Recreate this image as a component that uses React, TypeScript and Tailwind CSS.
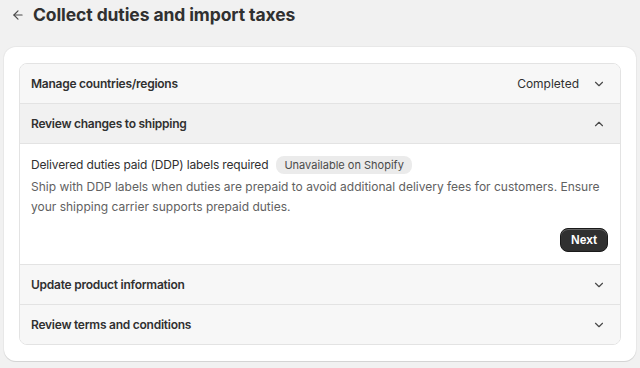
import { ChevronDown, ChevronUp, ArrowLeft } from 'lucide-react'

const STEPS = [
  { title: 'Manage countries/regions', status: 'Completed', open: false },
  { title: 'Review changes to shipping', open: true },
  { title: 'Update product information', open: false },
  { title: 'Review terms and conditions', open: false },
]

function Header({ title, status, open }: { title: string; status?: string; open: boolean }) {
  return (
    <div
      className={`flex h-[39px] items-center justify-between pl-[11px] pr-3 ${open ? 'bg-[#f1f1f1]' : 'bg-[#f7f7f7]'}`}
    >
      <span className="text-[12px] font-semibold tracking-[-0.25px] text-[#303030]">{title}</span>
      <div className="flex items-center gap-[13px] pr-[2px]">
        {status && <span className="text-[12px] text-[#303030]">{status}</span>}
        {open ? (
          <ChevronUp size={14} strokeWidth={2} className="text-[#4a4a4a]" />
        ) : (
          <ChevronDown size={14} strokeWidth={2} className="text-[#4a4a4a]" />
        )}
      </div>
    </div>
  )
}

export default function App() {
  return (
    <div className="min-h-[368px] bg-[#f1f1f1] pt-px font-['Inter',sans-serif] text-[#303030]">
      <div className="flex h-[28px] items-center gap-2 px-[11px]">
        <ArrowLeft size={14} strokeWidth={2} className="text-[#4a4a4a]" />
        <h1 className="text-[17.5px] font-bold tracking-[-0.1px] text-[#303030]">
          Collect duties and import taxes
        </h1>
      </div>

      <div className="mx-1 mt-[18px] rounded-xl bg-white px-[15px] py-4 shadow-[0_1px_0_#d4d4d4,0_0_0_1px_#e8e8e8]">
        <div className="overflow-hidden rounded-lg border border-[#e3e3e3]">
          {STEPS.map((s, i) => (
            <div key={s.title} className={i > 0 ? 'border-t border-[#e3e3e3]' : ''}>
              <Header title={s.title} status={s.status} open={s.open} />
              {s.open && (
                <div className="border-t border-[#e3e3e3] bg-white pl-[11px] pr-3 pt-3 pb-3">
                  <div className="flex items-center gap-2">
                    <span className="text-[12px] tracking-[-0.15px]">Delivered duties paid (DDP) labels required</span>
                    <span className="rounded-lg bg-[#ebebeb] px-2 py-[1px] text-[11px] leading-4 text-[#4a4a4a]">
                      Unavailable on Shopify
                    </span>
                  </div>
                  <p className="mt-[3px] text-[12px] leading-5 text-[#616161]">
                    Ship with DDP labels when duties are prepaid to avoid additional delivery fees for customers. Ensure your shipping carrier supports prepaid duties.
                  </p>
                  <div className="mt-[11px] flex justify-end">
                    <button className="h-6 rounded-lg border border-[#1a1a1a] bg-[#303030] px-[10px] font-['Liberation_Sans',sans-serif] text-[12px] font-bold text-white shadow-[inset_0_1px_0_rgba(255,255,255,0.25)]">
                      Next
                    </button>
                  </div>
                </div>
              )}
            </div>
          ))}
        </div>
      </div>
    </div>
  )
}
